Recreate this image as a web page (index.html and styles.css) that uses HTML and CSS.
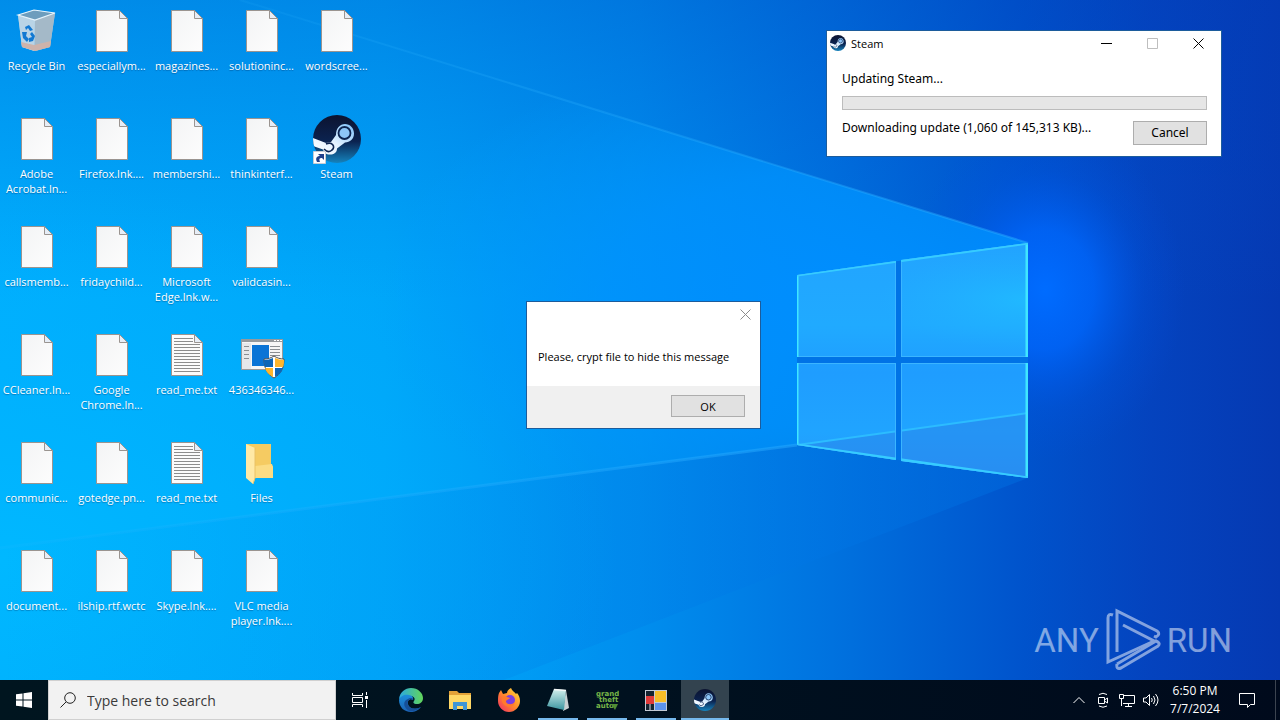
FILE: index.html
```html
<!DOCTYPE html>
<html lang="en">
<head>
    <meta charset="UTF-8">
    <meta name="viewport" content="width=device-width, initial-scale=1.0">
    <title>Desktop</title>
    <link rel="stylesheet" href="styles.css">
</head>
<body>
    <!-- shared icons -->
    <svg class="sprite" aria-hidden="true">
        <defs>
            <linearGradient id="steam-bg" x1="0" y1="0" x2="0" y2="1">
                <stop offset="0" stop-color="#0c1330"/>
                <stop offset=".55" stop-color="#0b2350"/>
                <stop offset="1" stop-color="#1583bd"/>
            </linearGradient>
            <linearGradient id="steam-arm" x1="0" y1="1" x2="1" y2="0">
                <stop offset="0" stop-color="#ffffff"/>
                <stop offset=".45" stop-color="#e4f2ff"/>
                <stop offset="1" stop-color="#7cc0fa"/>
            </linearGradient>
            <linearGradient id="paper" x1="0" y1="0" x2="1" y2="1">
                <stop offset="0" stop-color="#f3f4f5"/>
                <stop offset="1" stop-color="#fdfdfd"/>
            </linearGradient>
        </defs>
        <symbol id="file" viewBox="0 0 48 48">
            <path d="M8.500 3.500h23l8 8v33h-31z" fill="url(#paper)" stroke="#9a9490"/>
            <path d="M31.500 3.500v8h8z" fill="#e6edf6" stroke="#9a9490"/>
        </symbol>
        <symbol id="text-file" viewBox="0 0 48 48">
            <path d="M8.500 3.500h23l8 8v33h-31z" fill="#fbfbfb" stroke="#9a9490"/>
            <path d="M11 7.500h19M11 10.500h19M11 13.500h26M11 16.500h26M11 19.500h26M11 22.500h26M11 25.500h26M11 28.500h26M11 31.500h26M11 34.500h26M11 37.500h26M11 40.500h26" stroke="#8c8c8c"/>
            <path d="M31.500 3.500v8h8z" fill="#e6edf6" stroke="#9a9490"/>
        </symbol>
        <symbol id="steam" viewBox="0 0 48 48">
            <clipPath id="disc"><circle cx="24" cy="24" r="24"/></clipPath>
            <circle cx="24" cy="24" r="24" fill="url(#steam-bg)"/>
            <g clip-path="url(#disc)">
                <path d="M0 23L13 28c3-1 4-1 5-1l5-7c0-7 4-11 9-11 5 0 9 4 9 9.500s-4 9-9 9l-8 6c0 4-3 6-7 6-4 0-6-2-7-5L0 31z" fill="url(#steam-arm)"/>
                <circle cx="31.500" cy="18" r="6" fill="#8dc6f8" stroke="#0d2450" stroke-width="1.800"/>
                <path d="M13 29c6-3 10 3 6 6-2 2-5 2-8-1" fill="none" stroke="#0d2450" stroke-width="1.600"/>
            </g>
        </symbol>
    </svg>

    <main class="desktop">
        <svg class="wallpaper" viewBox="0 0 1280 720" preserveAspectRatio="none" aria-hidden="true">
            <defs>
                <linearGradient id="sky" x1="0" y1="0" x2="1" y2="0">
                    <stop offset="0" stop-color="#00aefd"/>
                    <stop offset=".3" stop-color="#00a6f9"/>
                    <stop offset=".5" stop-color="#008eee"/>
                    <stop offset=".65" stop-color="#0072df"/>
                    <stop offset=".8" stop-color="#0053cc"/>
                    <stop offset=".9" stop-color="#0443be"/>
                    <stop offset="1" stop-color="#0539b2"/>
                </linearGradient>
                <linearGradient id="top" x1="0" y1="0" x2="0" y2="1">
                    <stop offset="0" stop-color="#0040bc" stop-opacity=".3"/>
                    <stop offset="1" stop-color="#0050d0" stop-opacity="0"/>
                </linearGradient>
                <radialGradient id="glow">
                    <stop offset="0" stop-color="#006cff"/>
                    <stop offset=".35" stop-color="#0066fc" stop-opacity=".8"/>
                    <stop offset=".7" stop-color="#0058ea" stop-opacity=".25"/>
                    <stop offset="1" stop-color="#0050e0" stop-opacity="0"/>
                </radialGradient>
                <radialGradient id="haze">
                    <stop offset="0" stop-color="#008eff"/>
                    <stop offset=".5" stop-color="#0094ff" stop-opacity=".75"/>
                    <stop offset="1" stop-color="#00a0ff" stop-opacity="0"/>
                </radialGradient>
                <radialGradient id="cyan">
                    <stop offset="0" stop-color="#00b8ff"/>
                    <stop offset="1" stop-color="#00b0ff" stop-opacity="0"/>
                </radialGradient>
                <linearGradient id="beam" x1="0" y1="0" x2="1" y2="0">
                    <stop offset="0" stop-color="#30b8ff" stop-opacity=".1"/>
                    <stop offset="1" stop-color="#28aaff" stop-opacity=".5"/>
                </linearGradient>
                <linearGradient id="shade" x1="0" y1="0" x2="1" y2="0">
                    <stop offset="0" stop-color="#006fe0" stop-opacity="0"/>
                    <stop offset="1" stop-color="#0078e8" stop-opacity=".35"/>
                </linearGradient>
                <linearGradient id="pane" x1="0" y1="0" x2="0" y2="1">
                    <stop offset="0" stop-color="#22a4ff"/>
                    <stop offset=".35" stop-color="#20aaff"/>
                    <stop offset=".55" stop-color="#1f9dff"/>
                    <stop offset=".8" stop-color="#20a4ff"/>
                    <stop offset="1" stop-color="#2698fa"/>
                </linearGradient>
                <radialGradient id="pane-glow">
                    <stop offset="0" stop-color="#20c0ff" stop-opacity=".7"/>
                    <stop offset="1" stop-color="#20b4ff" stop-opacity="0"/>
                </radialGradient>
                <clipPath id="panes">
                    <path d="M797 275L896 261V357H797zM901 260L1028 243V357H901zM797 363H896V460L797 445zM901 363H1028V478L901 461z"/>
                </clipPath>
                <clipPath id="wedge">
                    <path d="M240 0L1028 243V478L797 445L0 548V0z"/>
                </clipPath>
            </defs>
            <rect width="1280" height="720" fill="url(#sky)"/>
            <rect width="1280" height="300" fill="url(#top)"/>
            <ellipse cx="0" cy="560" rx="620" ry="380" fill="url(#cyan)"/>
            <ellipse cx="1045" cy="290" rx="140" ry="170" fill="url(#glow)"/>
            <g clip-path="url(#wedge)">
                <ellipse cx="850" cy="300" rx="480" ry="260" fill="url(#haze)"/>
            </g>
            <path d="M240 0L1028 243" stroke="url(#beam)" stroke-width="2"/>
            <path d="M797 445L1028 478L400 720H0V548z" fill="url(#shade)"/>
            <path d="M0 548L797 445" stroke="url(#beam)" stroke-width="3"/>
            <!-- window logo -->
            <path d="M797 275L1028 243V478L797 445z" fill="#0073e6"/>
            <g clip-path="url(#panes)">
                <rect x="797" y="243" width="231" height="236" fill="url(#pane)"/>
                <ellipse cx="1028" cy="300" rx="150" ry="50" fill="url(#pane-glow)"/>
                <path d="M797 445L1028 413V480H797z" fill="#2a84ea" opacity=".5"/>
                <path d="M797 445L1028 413" stroke="#2cbcff" stroke-width="2"/>
                <path d="M797 275L896 261V357H797zM901 260L1028 243V357H901zM797 363H896V460L797 445zM901 363H1028V478L901 461z" fill="none" stroke="#3bb5ff" stroke-width="2"/>
                <path d="M797 275V445M1027 243V478" fill="none" stroke="#40e6ff" stroke-width="3"/>
                <path d="M797 275L1028 243M797 445L1028 478" fill="none" stroke="#36ccff" stroke-width="3"/>
            </g>
        </svg>

        <nav class="icons" aria-label="Desktop icons">
            <a class="icon" href="#">
                <svg viewBox="0 0 48 48">
                    <path d="M5 8l16-5 21 3-5 34-15 4-13-4z" fill="#9fc6df"/>
                    <path d="M5 8l17 5-1 31-12-4z" fill="#b9d4e6"/>
                    <path d="M22 13l20-7-5 34-15 4z" fill="#a4b9c8"/>
                    <path d="M5 8l16-5 21 3-20 7z" fill="#6d9dbd" stroke="#e6f4fc" stroke-width="1.200"/>
                    <path d="M8 35l13 3 17-4-1 6-15 4-13-4z" fill="#cdb3ab"/>
                    <path d="M12 20l4-2 4 5-3 1-2-3-2 2zM9 25l5 0-1 4 3 3-2 3-4-4zM19 25l3 4-2 5-4 1v-4l3-1-2-3z" fill="#1279d2"/>
                </svg>
                <span>Recycle Bin</span>
            </a>
            <a class="icon" href="#"><svg><use href="#file"/></svg><span>Adobe<br>Acrobat.ln...</span></a>
            <a class="icon" href="#"><svg><use href="#file"/></svg><span>callsmemb...</span></a>
            <a class="icon" href="#"><svg><use href="#file"/></svg><span>CCleaner.ln...</span></a>
            <a class="icon" href="#"><svg><use href="#file"/></svg><span>communic...</span></a>
            <a class="icon" href="#"><svg><use href="#file"/></svg><span>document...</span></a>

            <a class="icon" href="#"><svg><use href="#file"/></svg><span>especiallym...</span></a>
            <a class="icon" href="#"><svg><use href="#file"/></svg><span>Firefox.lnk....</span></a>
            <a class="icon" href="#"><svg><use href="#file"/></svg><span>fridaychild...</span></a>
            <a class="icon" href="#"><svg><use href="#file"/></svg><span>Google<br>Chrome.ln...</span></a>
            <a class="icon" href="#"><svg><use href="#file"/></svg><span>gotedge.pn...</span></a>
            <a class="icon" href="#"><svg><use href="#file"/></svg><span>ilship.rtf.wctc</span></a>

            <a class="icon" href="#"><svg><use href="#file"/></svg><span>magazines...</span></a>
            <a class="icon" href="#"><svg><use href="#file"/></svg><span>membershi...</span></a>
            <a class="icon" href="#"><svg><use href="#file"/></svg><span>Microsoft<br>Edge.lnk.w...</span></a>
            <a class="icon" href="#"><svg><use href="#text-file"/></svg><span>read_me.txt</span></a>
            <a class="icon" href="#"><svg><use href="#text-file"/></svg><span>read_me.txt</span></a>
            <a class="icon" href="#"><svg><use href="#file"/></svg><span>Skype.lnk....</span></a>

            <a class="icon" href="#"><svg><use href="#file"/></svg><span>solutioninc...</span></a>
            <a class="icon" href="#"><svg><use href="#file"/></svg><span>thinkinterf...</span></a>
            <a class="icon" href="#"><svg><use href="#file"/></svg><span>validcasin...</span></a>
            <a class="icon" href="#">
                <svg viewBox="0 0 48 48">
                    <path d="M3.500 8.500h41v30h-41z" fill="#f6f6f6" stroke="#9a9a9a"/>
                    <path d="M3 8h42v3H3z" fill="#96999c"/>
                    <path d="M36 9.500h2M39 9.500h2M42 9.500h2" stroke="#fff"/>
                    <path d="M4 12h9v26H4z" fill="#e6e8ea"/>
                    <path d="M6 15.500h5M6 19.500h5M6 23.500h5M6 27.500h5M32 15.500h10M32 18.500h10M32 21.500h10M32 24.500h10" stroke="#8b8f93"/>
                    <path d="M14 14h17v21H14z" fill="#0a74d6"/>
                    <path d="M36 25c3 2 6 3 10 3 0 9-3 15-10 19-7-4-10-10-10-19 4 0 7-1 10-3z" fill="#fff" stroke="#525252"/>
                    <path d="M35 27v9h-8c-1-2-1-5-1-7 4 0 6-1 9-2zM37 37h8c-1 4-4 7-8 9z" fill="#0d66b8"/>
                    <path d="M37 27v9h8c1-2 1-5 1-7-4 0-6-1-9-2zM35 37h-8c1 4 4 7 8 9z" fill="#fdb62c"/>
                </svg>
                <span>436346346...</span>
            </a>
            <a class="icon" href="#">
                <svg viewBox="0 0 48 48">
                    <path d="M8 5h25v20l2 3v11H8z" fill="#f5cb62"/>
                    <path d="M17 27l17-2 1 3v11H17z" fill="#fbdc84"/>
                    <path d="M8 5l9 4v31l-2 5-7-6z" fill="#ffe9a6"/>
                    <path d="M17 9v30l-2 6" fill="none" stroke="#eac266"/>
                </svg>
                <span>Files</span>
            </a>
            <a class="icon" href="#"><svg><use href="#file"/></svg><span>VLC media<br>player.lnk....</span></a>

            <a class="icon" href="#"><svg><use href="#file"/></svg><span>wordscree...</span></a>
            <a class="icon" href="#">
                <svg viewBox="0 0 48 48">
                    <use href="#steam"/>
                    <path d="M.5 36.500h12v12h-12z" fill="#fff" stroke="#c8ccd4"/>
                    <path d="M4 47c-2-4 0-6 3-6l-2-2h6v6l-2-2c-3 0-3 1-2 4z" fill="#21408a"/>
                </svg>
                <span>Steam</span>
            </a>
        </nav>

        <section class="window steam-window" aria-label="Steam">
            <header class="titlebar">
                <svg class="titlebar-icon"><use href="#steam"/></svg>
                <h1>Steam</h1>
                <button aria-label="Minimize"><svg viewBox="0 0 11 11"><path d="M0 5.500h11"/></svg></button>
                <button aria-label="Maximize" disabled><svg viewBox="0 0 11 11"><path d="M.5.5h10v10H.5z"/></svg></button>
                <button aria-label="Close"><svg viewBox="0 0 11 11"><path d="M.5.5l10 10M10.500.5l-10 10"/></svg></button>
            </header>
            <div class="update">
                <label for="update-progress">Updating Steam...</label>
                <progress id="update-progress" value="0" max="145313"></progress>
                <div class="update-status">
                    <p>Downloading update (1,060 of 145,313 KB)...</p>
                    <button class="btn">Cancel</button>
                </div>
            </div>
        </section>

        <section class="window message-box" role="dialog" aria-label="Message">
            <header class="message-head">
                <button aria-label="Close"><svg viewBox="0 0 11 11"><path d="M.5.5l10 10M10.500.5l-10 10"/></svg></button>
            </header>
            <p>Please, crypt file to hide this message</p>
            <footer><button class="btn">OK</button></footer>
        </section>

        <div class="watermark">
            <span>ANY</span>
            <svg viewBox="0 0 56 64">
                <path d="M8 7Q3 5 3 10V54L49 33 18 17"/>
                <path d="M12 44V3L52 23Q56 26 51 29L49 28"/>
                <path d="M12 56Q11 62 16 60L53 38Q56 35 51 33L12 56"/>
            </svg>
            <span>RUN</span>
        </div>
    </main>

    <footer class="taskbar">
        <button class="start" aria-label="Start">
            <svg viewBox="0 0 16 16"><path d="M0 2.300L6.500 1.400V7.500H0zM7.500 1.200L16 0V7.500H7.500zM0 8.500H6.500V14.600L0 13.700zM7.500 8.500H16V16L7.500 14.800z" fill="#fff"/></svg>
        </button>
        <label class="search">
            <svg viewBox="0 0 16 16"><circle cx="10" cy="6" r="5.300"/><path d="M6.200 9.800L.5 15.500"/></svg>
            <input type="text" placeholder="Type here to search" aria-label="Search">
        </label>
        <button class="task-view" aria-label="Task view">
            <svg viewBox="0 0 16 16"><path d="M.5 1v2.500h10V1M.5 15v-2.500h10V15M.5 5.500h10v5H.5zM14.500 0v3M14.500 8v8" fill="none" stroke="#fff"/><path d="M13 4h3v3h-3z" fill="#fff"/></svg>
        </button>
        <nav class="tasks" aria-label="Taskbar">
            <button aria-label="Microsoft Edge">
                <svg viewBox="0 0 24 24">
                    <defs>
                        <linearGradient id="edge-top" x1="0" x2="1"><stop offset="0" stop-color="#2aa8e0"/><stop offset="1" stop-color="#62d65a"/></linearGradient>
                        <linearGradient id="edge-low" x1="0" y1="0" x2="0" y2="1"><stop offset="0" stop-color="#1c8edb"/><stop offset="1" stop-color="#1b62b4"/></linearGradient>
                    </defs>
                    <path d="M0 11C1 4 6 0 12 0c7 0 12 5 12 10 0 4-3 6-6 6-4 0-4-2-3-3 2-3-1-5-4-5-5 0-9 2-11 3z" fill="url(#edge-top)"/>
                    <path d="M0 12c1-4 6-6 10-5 3 0 5 3 4 5-3-2-6 1-5 4 1 5 8 6 13 3-3 4-7 5-10 5C5 24 0 19 0 12z" fill="url(#edge-low)"/>
                    <path d="M9 13c-2 6 5 10 13 6-5 5-13 6-16 0-2-4 0-7 3-8 2-2 6-1 5 1-2-1-4-1-5 1z" fill="#164f98"/>
                </svg>
            </button>
            <button aria-label="File Explorer">
                <svg viewBox="0 0 24 24">
                    <path d="M1 3h8l2 2h12v16H1z" fill="#e3a238"/>
                    <path d="M1 7h22v14H1z" fill="#ffd866"/>
                    <path d="M5 22v-8h14v8h-4v-4H9v4z" fill="#3f95d6"/>
                </svg>
            </button>
            <button aria-label="Firefox">
                <svg viewBox="0 0 24 24">
                    <defs><linearGradient id="fox" x1="1" y1="0" x2="0" y2="1"><stop offset="0" stop-color="#ffe03c"/><stop offset=".5" stop-color="#ff8a2a"/><stop offset="1" stop-color="#f0286a"/></linearGradient></defs>
                    <path d="M2 5l2-3 2 4 4-1c0-2 2-4 4-5 1 3 4 4 5 6l1-1c2 2 3 5 3 8 0 6-5 11-11 11S1 19 1 13c0-3 0-5 1-8z" fill="url(#fox)"/>
                    <circle cx="13" cy="12" r="5" fill="#7a3fe0"/>
                    <path d="M5 9c3-1 5 0 8 1-1 2-4 1-4 4 2 3 6 3 9 0-1 5-6 6-9 4-4-2-5-6-4-9z" fill="#ff7a2c"/>
                </svg>
            </button>
            <button class="running" aria-label="Notepad">
                <svg viewBox="0 0 24 24">
                    <defs><linearGradient id="glass" x1="0" y1="0" x2="0" y2="1"><stop offset="0" stop-color="#d4f1ee"/><stop offset="1" stop-color="#3b95a0"/></linearGradient></defs>
                    <path d="M20 2l3 18-6 3z" fill="#c8d0d2"/>
                    <path d="M8 1l12 1-2 20L1 18z" fill="url(#glass)"/>
                    <path d="M8 1.500l12 1" stroke="#f4f7f7" stroke-width="1.500"/>
                </svg>
            </button>
            <button class="running" aria-label="Grand Theft Auto">
                <svg class="gta" viewBox="0 0 24 24"><text x="1" y="8">grand</text><text x="4" y="14">theft</text><text x="1" y="20">auto</text><path d="M16 16h7l-3 6z" fill="#4f8c34"/></svg>
            </button>
            <button class="running" aria-label="Application">
                <svg viewBox="0 0 24 24">
                    <path d="M1 2h22v21H1z" fill="#c4cad4"/>
                    <path d="M2 3h8v6H2zM2 9h8v13H2z" fill="#152330"/>
                    <path d="M2 8h8v8H2z" fill="#e03a3a"/>
                    <path d="M5.500 16h1v6h-1z" fill="#d9dee6"/>
                    <path d="M11 3h11v11H11z" fill="#f7bd28"/>
                    <path d="M11 15h11v7H11z" fill="#5c92ec"/>
                </svg>
            </button>
            <button class="running active" aria-label="Steam"><svg><use href="#steam"/></svg></button>
        </nav>
        <div class="tray">
            <button aria-label="Show hidden icons"><svg viewBox="0 0 16 16"><path d="M2.500 11L8 5.500 13.500 11"/></svg></button>
            <button aria-label="Meet Now"><svg viewBox="0 0 16 16"><path d="M3.500 5.500h6v6h-6zM9.500 8l3-2v5l-3-2M4 2.500Q8 0 12 2.500M4 14Q8 16.500 12 14"/></svg></button>
            <button aria-label="Network"><svg viewBox="0 0 16 16"><path d="M5 3.500h10.500v8H4M9.500 11.500V14M6 14.500h7M.5 2.500h4v4h-4zM2.500 6.500V14"/></svg></button>
            <button aria-label="Volume"><svg viewBox="0 0 16 16"><path d="M.5 6v4H3l3.500 3.500v-11L3 6zM8.500 6Q10 8 8.500 10M10.500 4Q13.500 8 10.500 12M12.500 2Q17.500 8 12.500 14"/></svg></button>
        </div>
        <button class="clock"><time datetime="2024-07-07T18:50">6:50 PM<br>7/7/2024</time></button>
        <button class="notifications" aria-label="Notifications"><svg viewBox="0 0 16 16"><path d="M.5 1.500h15v11h-4L8.500 15.500v-3h-8z"/></svg></button>
        <button class="show-desktop" aria-label="Show desktop"></button>
    </footer>
</body>
</html>
```
FILE: styles.css
```css
* {
    box-sizing: border-box;
}
body {
    margin: 0;
    height: 100vh;
    display: flex;
    flex-direction: column;
    overflow: hidden;
    font-family: "Open Sans", "Noto Sans", sans-serif;
    font-size: 12px;
    color: #000;
}
h1, p {
    margin: 0;
    font-size: inherit;
    font-weight: normal;
}
button {
    padding: 0;
    border: 0;
    background: none;
    font: inherit;
    color: inherit;
}
.sprite {
    position: absolute;
    width: 0;
    height: 0;
}

/* desktop */
.desktop {
    position: relative;
    flex: 1;
    min-height: 0;
    background: #0090fb;
}
.wallpaper {
    position: absolute;
    top: 0;
    left: 0;
    width: 100vw;
    height: 100vh;
}
.icons {
    position: relative;
    display: grid;
    grid-auto-flow: column;
    grid-template-rows: repeat(6, 108px);
    grid-auto-columns: 75px;
    justify-content: start;
}
.icon {
    display: flex;
    flex-direction: column;
    align-items: center;
    gap: 3px;
    padding: 7px 2px 0 0;
    color: #fff;
    font-size: 11px;
    line-height: 15px;
    text-align: center;
    text-decoration: none;
    text-shadow: 0 1px 1px rgba(0, 40, 90, 0.4);
    white-space: nowrap;
}
.icon svg {
    width: 48px;
    height: 48px;
    overflow: visible;
}

/* windows */
.window {
    position: absolute;
    background: #fff;
    border: 1px solid #1c5c9c;
}
.window svg {
    width: 11px;
    height: 11px;
    fill: none;
    stroke: #000;
}
.btn {
    border: 1px solid #adadad;
    background: #e1e1e1;
}
.steam-window {
    top: 30px;
    right: 58px;
    width: 396px;
}
.titlebar {
    display: flex;
    align-items: center;
    height: 24px;
    padding-left: 3px;
    font-size: 11px;
}
.titlebar .titlebar-icon {
    width: 16px;
    height: 16px;
    margin-right: 5px;
    stroke: none;
}
.titlebar h1 {
    flex: 1;
}
.titlebar button {
    width: 46px;
    height: 24px;
}
.titlebar svg {
    display: block;
    margin: auto;
}
.titlebar button:disabled {
    opacity: 0.25;
}
.update {
    display: flex;
    flex-direction: column;
    padding: 15px 14px 11px 15px;
    font-family: "Noto Sans", sans-serif;
    line-height: 18px;
}
progress {
    appearance: none;
    width: 100%;
    height: 14px;
    margin: 8px 0 9px;
    border: 1px solid #bcbcbc;
    background: #e6e6e6;
}
progress::-webkit-progress-bar {
    background: #e6e6e6;
}
.update-status {
    display: flex;
    justify-content: space-between;
}
.update-status .btn {
    width: 74px;
    height: 24px;
    margin-top: 2px;
}
.message-box {
    top: 301px;
    left: 526px;
    width: 235px;
    font-size: 11px;
}
.message-head {
    display: flex;
    justify-content: flex-end;
    padding: 4px 7px;
}
.message-head button {
    width: 16px;
    height: 16px;
}
.message-head svg {
    display: block;
    margin: auto;
    stroke: #8c8c8c;
}
.message-box p {
    padding: 22px 11px 20px;
    line-height: 18px;
}
.message-box footer {
    display: flex;
    justify-content: flex-end;
    padding: 9px 15px 11px;
    background: #f0f0f0;
}
.message-box .btn {
    width: 74px;
    height: 22px;
}

/* watermark */
.watermark {
    position: absolute;
    right: 48px;
    bottom: 8px;
    display: flex;
    align-items: center;
    gap: 6px;
    color: #fff;
    font-family: Roboto, sans-serif;
    font-size: 33px;
    opacity: 0.5;
}
.watermark svg {
    width: 56px;
    height: 64px;
    fill: none;
    stroke: #fff;
    stroke-width: 3;
}

/* taskbar */
.taskbar {
    position: relative;
    display: flex;
    height: 40px;
    background: linear-gradient(90deg, #00151f, #00111f 50%, #000a1c);
    color: #fff;
}
.taskbar svg {
    display: block;
    margin: auto;
    width: 16px;
    height: 16px;
}
.start, .task-view {
    width: 48px;
}
.search {
    display: flex;
    align-items: center;
    gap: 11px;
    width: 288px;
    padding: 0 11px;
    border: 1px solid #d0d0d0;
    background: #f2f2f2;
}
.taskbar .search svg {
    margin: 0;
    fill: none;
    stroke: #222;
}
.search input {
    flex: 1;
    min-width: 0;
    padding: 0;
    border: 0;
    outline: 0;
    background: none;
    font: inherit;
    font-size: 14px;
}
.search input::placeholder {
    color: #3a3a3a;
}
.tasks {
    display: flex;
    gap: 1px;
    margin-left: 3px;
}
.tasks button {
    width: 48px;
}
.tasks svg {
    width: 24px;
    height: 24px;
}
.tasks .running {
    background: linear-gradient(#76b9ed, #76b9ed) center bottom / 40px 2px no-repeat;
}
.tasks .active {
    background-color: #33434f;
    background-size: 48px 2px;
}
.tasks .active svg {
    width: 22px;
    height: 22px;
}
.gta text {
    fill: #77b548;
    font-family: "DejaVu Sans", sans-serif;
    font-size: 7px;
    font-weight: bold;
}
.tray {
    display: flex;
    gap: 8px;
    margin-left: auto;
}
.tray svg, .notifications svg {
    fill: none;
    stroke: #fff;
}
.clock {
    width: 72px;
    line-height: 18px;
}
.notifications {
    width: 32px;
}
.show-desktop {
    width: 5px;
    margin-left: 12px;
    border-left: 1px solid #3c4450;
}
```
